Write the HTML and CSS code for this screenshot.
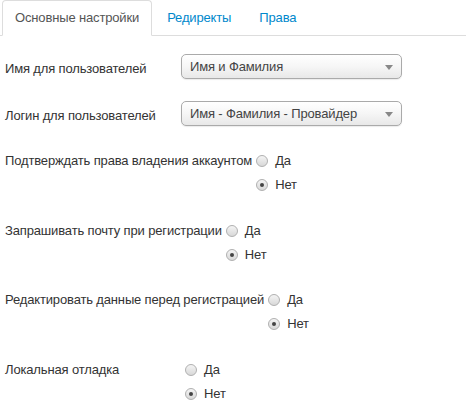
FILE: index.html
```html
<!DOCTYPE html>
<html lang="ru">
<head>
<meta charset="utf-8">
<title>Настройки</title>
<link rel="stylesheet" href="styles.css">
</head>
<body>
<ul class="tabs">
  <li class="tab active"><a>Основные настройки</a></li>
  <li class="tab"><a>Редиректы</a></li>
  <li class="tab"><a>Права</a></li>
</ul>
<form class="form">
  <div class="row row-select">
    <label class="lbl">Имя для пользователей</label>
    <div class="select"><span>Имя и Фамилия</span><i class="caret"></i></div>
  </div>
  <div class="row row-select second">
    <label class="lbl">Логин для пользователей</label>
    <div class="select"><span>Имя - Фамилия - Провайдер</span><i class="caret"></i></div>
  </div>
  <div class="row row-radio first-radio">
    <label class="lbl">Подтверждать права владения аккаунтом</label>
    <div class="opts">
      <div class="opt"><span class="radio"></span>Да</div>
      <div class="opt"><span class="radio checked"></span>Нет</div>
    </div>
  </div>
  <div class="row row-radio">
    <label class="lbl">Запрашивать почту при регистрации</label>
    <div class="opts">
      <div class="opt"><span class="radio"></span>Да</div>
      <div class="opt"><span class="radio checked"></span>Нет</div>
    </div>
  </div>
  <div class="row row-radio">
    <label class="lbl">Редактировать данные перед регистрацией</label>
    <div class="opts">
      <div class="opt"><span class="radio"></span>Да</div>
      <div class="opt"><span class="radio checked"></span>Нет</div>
    </div>
  </div>
  <div class="row row-radio">
    <label class="lbl">Локальная отладка</label>
    <div class="opts">
      <div class="opt"><span class="radio"></span>Да</div>
      <div class="opt"><span class="radio checked"></span>Нет</div>
    </div>
  </div>
</form>
</body>
</html>
```

FILE: styles.css
```css
html, body {
  margin: 0;
  padding: 0;
  background: #fff;
}
body {
  font-family: "Liberation Sans", Arial, sans-serif;
  font-size: 13px;
  letter-spacing: -0.15px;
  color: #333;
  width: 466px;
  height: 400px;
  overflow: hidden;
}
.tabs {
  list-style: none;
  margin: 0;
  padding: 0 0 0 2px;
  display: flex;
  border-bottom: 1px solid #ddd;
}
.tab {
  margin-bottom: -1px;
  margin-right: 2px;
}
.tab a {
  display: block;
  padding: 8px 12px;
  line-height: 18px;
  border: 1px solid transparent;
  border-radius: 4px 4px 0 0;
  color: #0088cc;
  cursor: pointer;
}
.tab.active a {
  color: #555;
  background: #fff;
  border-color: #ddd #ddd transparent;
}
.form {
  margin: 0;
  padding: 18px 0 0 5px;
}
.row {
  display: flex;
  align-items: flex-start;
}
.lbl {
  min-width: 176px;
  flex: none;
}
.row-select .lbl {
  padding-top: 6px;
  line-height: 18px;
}
.row-select.second {
  margin-top: 22px;
}
.select {
  box-sizing: border-box;
  width: 221px;
  height: 25px;
  border: 1px solid #aaa;
  border-radius: 5px;
  background: linear-gradient(#fff 0%, #f6f6f6 50%, #e8e8e8 100%);
  box-shadow: 0 1px 1px rgba(0,0,0,0.08);
  display: flex;
  align-items: center;
  justify-content: space-between;
  padding: 0 8px 0 8px;
  line-height: 18px;
  color: #444;
}
.caret {
  width: 0;
  height: 0;
  border-left: 4px solid transparent;
  border-right: 4px solid transparent;
  border-top: 5px solid #888;
  margin-top: 1px;
}
.row-radio {
  margin-top: 21.5px;
}
.row-radio.first-radio {
  margin-top: 23px;
}
.row-radio .lbl {
  line-height: 24px;
  padding-right: 4px;
}
.opts {
  display: flex;
  flex-direction: column;
}
.opt {
  display: flex;
  align-items: center;
  height: 24px;
  line-height: 24px;
}
.radio {
  box-sizing: border-box;
  width: 12px;
  height: 12px;
  border-radius: 50%;
  border: 1px solid #b0b0b0;
  background: linear-gradient(#f4f4f4, #d8d8d8);
  margin-right: 7px;
  position: relative;
}
.radio.checked::after {
  content: "";
  position: absolute;
  left: 3px;
  top: 3px;
  width: 4px;
  height: 4px;
  border-radius: 50%;
  background: #444;
}
```
